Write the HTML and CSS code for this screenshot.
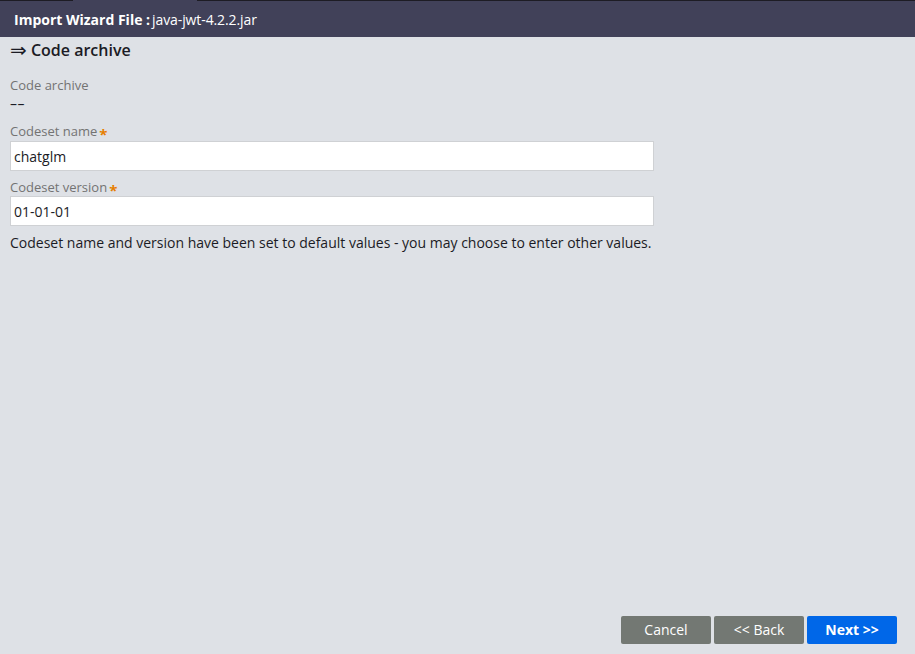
FILE: index.html
```html
<!DOCTYPE html>
<html>
<head>
<meta charset="utf-8">
<link rel="stylesheet" href="styles.css">
</head>
<body>
<div class="app">
  <div class="topline"><span class="tl-dark tl-a"></span><span class="tl-gap"></span><span class="tl-dark tl-b"></span></div>
  <header class="header">
    <span class="h-title">Import Wizard File :</span><span class="h-file">java-jwt-4.2.2.jar</span>
  </header>
  <main class="content">
    <h2 class="section"><span class="arrow">⇒</span> Code archive</h2>
    <div class="field f1">
      <div class="label">Code archive</div>
      <div class="value">––</div>
    </div>
    <div class="field f2">
      <div class="label">Codeset name<span class="req">*</span></div>
      <input class="input" type="text" value="chatglm">
    </div>
    <div class="field f3">
      <div class="label">Codeset version<span class="req">*</span></div>
      <input class="input" type="text" value="01-01-01">
    </div>
    <p class="note">Codeset name and version have been set to default values - you may choose to enter other values.</p>
  </main>
  <footer class="footer">
    <button class="btn btn-grey">Cancel</button>
    <button class="btn btn-grey">&lt;&lt; Back</button>
    <button class="btn btn-primary">Next &gt;&gt;</button>
  </footer>
</div>
</body>
</html>
```
FILE: styles.css
```css
* { box-sizing: border-box; }
html, body { margin: 0; padding: 0; height: 100%; }
body {
  font-family: "Open Sans", "Noto Sans", sans-serif;
  background: #dee1e6;
  color: #1b1b25;
}
.app { display: flex; flex-direction: column; height: 654px; }
.topline { display: flex; height: 1px; }
.tl-dark { background: #1d1c24; }
.tl-a { width: 73px; }
.tl-gap { width: 124px; background: #414159; }
.tl-b { flex: 1; }
.header {
  height: 36px;
  background: #414159;
  color: #fff;
  display: flex;
  align-items: center;
  padding-left: 14px;
  font-size: 14px;
}
.h-title { font-weight: 700; margin-right: 2px; }
.h-file { font-weight: 400; letter-spacing: -0.1px; }
.content { flex: 1; padding: 0 10px; }
.section {
  margin: 2px 0 0;
  font-size: 16px;
  font-weight: 600;
  line-height: 22px;
  color: #1b1b25;
}
.arrow {
  font-family: "DejaVu Sans", sans-serif;
  font-weight: 400;
  font-size: 20px;
  line-height: 0;
  vertical-align: -1px;
}
.label {
  font-size: 13px;
  color: #737373;
  line-height: 18px;
}
.f1 { margin-top: 15px; }
.f2 { margin-top: 9px; }
.f3 { margin-top: 7px; }
.f2 .input { margin-top: 1px; }
.req {
  color: #e67e00;
  margin-left: 2px;
  font-size: 15px;
  font-weight: 700;
  vertical-align: -4px;
  line-height: 0;
}
.value {
  margin-top: 1px;
  font-size: 14px;
  line-height: 18px;
  color: #1b1b25;
  letter-spacing: 0.6px;
}
.input {
  display: block;
  width: 644px;
  height: 30px;
  margin-top: 0;
  border: 1px solid #cfd1d4;
  background: #fff;
  font-family: inherit;
  font-size: 14px;
  color: #1b1b25;
  padding: 0 3px;
  outline: none;
}
.note {
  margin: 7px 0 0;
  font-size: 14px;
  line-height: 20px;
  color: #1b1b25;
}
.footer {
  display: flex;
  justify-content: flex-end;
  gap: 3px;
  padding: 0 18px 10px 0;
}
.btn {
  width: 90px;
  height: 28px;
  border: none;
  border-radius: 2px;
  font-family: inherit;
  font-size: 14px;
  color: #fff;
  padding: 0 0 1px;
}
.btn-grey { background: #737873; }
.btn-primary { background: #0067e8; font-weight: 700; }
```
